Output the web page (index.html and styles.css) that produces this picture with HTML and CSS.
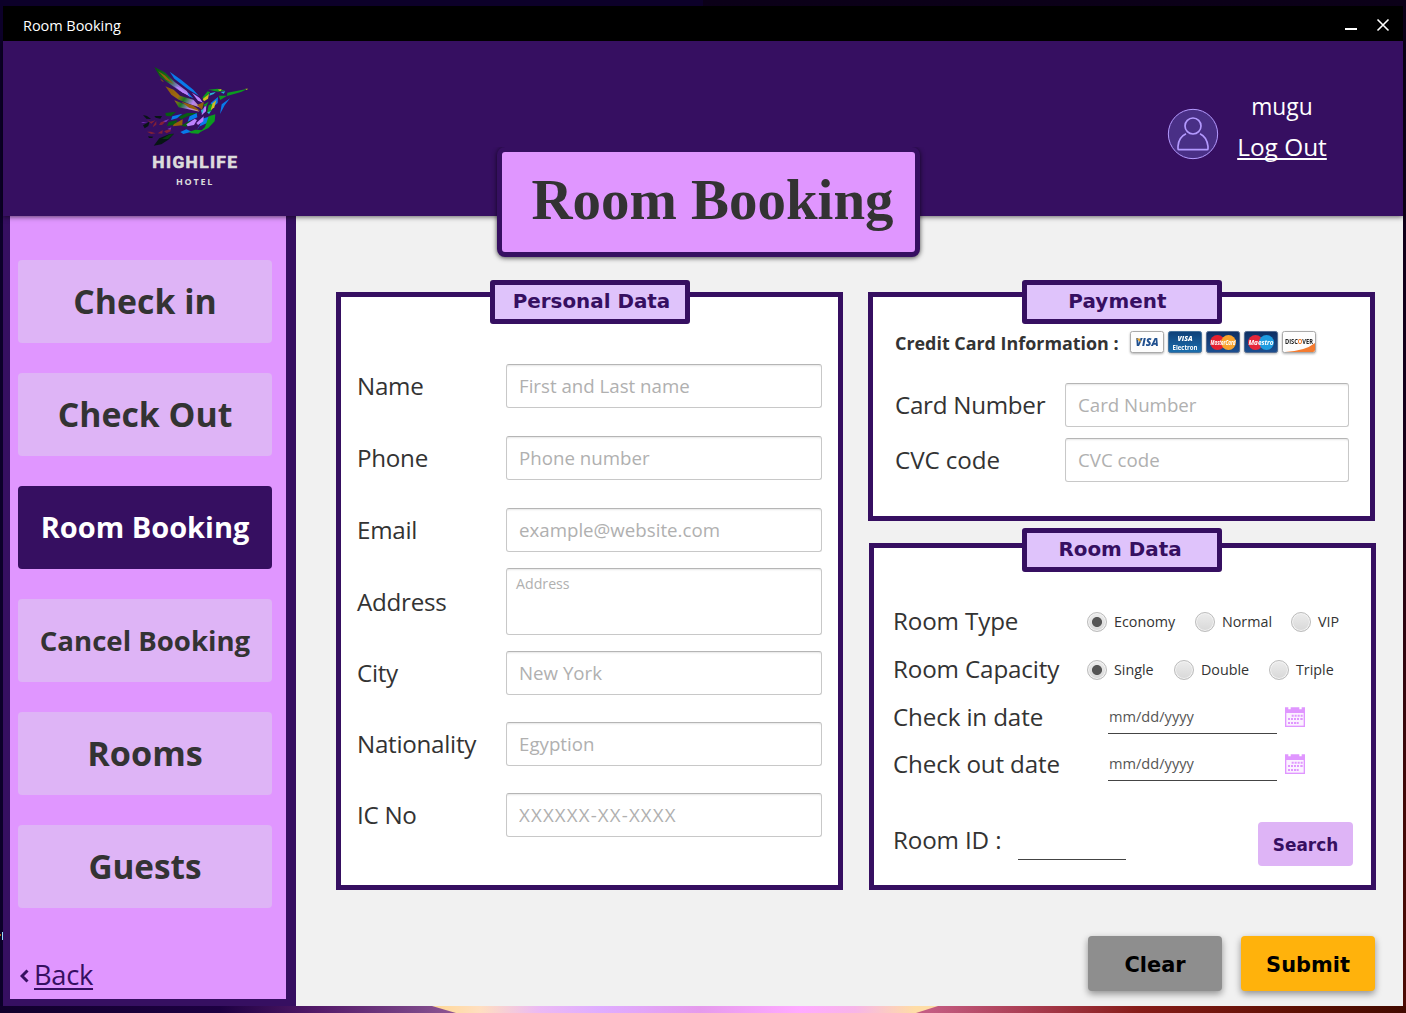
FILE: index.html
```html
<!DOCTYPE html>
<html lang="en">
<head>
<meta charset="utf-8">
<title>Room Booking</title>
<link rel="stylesheet" href="styles.css">
</head>
<body>
<svg width="0" height="0" class="defs" aria-hidden="true">
  <symbol id="calendar" viewBox="0 0 60 60">
    <path d="M0 1H10V7H17V1H43V7H50V1H60V60H0Z" fill="#e096ff"/>
    <path d="M4 18H56V56H4Z" fill="#fbf1ff"/>
    <path d="M20 23h6v6h-6zM29 23h6v6h-6zM38 23h6v6h-6zM47 23h6v6h-6zM9 33h6v6h-6zM18 33h6v6h-6zM27 33h6v6h-6zM36 33h6v6h-6zM46 33h7v6h-7zM9 45h6v6h-6zM18 45h6v6h-6zM27 45h6v6h-6zM35 45h6v6h-6z" fill="#e096ff"/>
  </symbol>
</svg>
<div class="window">
  <div class="titlebar">
    <span class="titlebar-text">Room Booking</span>
    <svg class="controls" width="46" height="14" viewBox="0 0 46 14">
      <path d="M0 10h12v2H0z" fill="#fff"/>
      <path d="M32.5 1.500L43.500 12.500M43.500 1.500L32.500 12.500" stroke="#fff" stroke-width="1.600"/>
    </svg>
  </div>
  <header class="header">
    <svg class="logo" width="130" height="140" viewBox="0 0 390 420">
      <defs>
        <linearGradient id="wing" gradientUnits="userSpaceOnUse" x1="73" y1="36" x2="218" y2="150">
          <stop offset="0" stop-color="#07530f"/><stop offset=".3" stop-color="#14701c"/><stop offset=".5" stop-color="#8f7bd8"/><stop offset=".75" stop-color="#bd82ff"/><stop offset="1" stop-color="#3f86e6"/>
        </linearGradient>
        <linearGradient id="wing-low" gradientUnits="userSpaceOnUse" x1="106" y1="94" x2="222" y2="168">
          <stop offset="0" stop-color="#8a5a0b"/><stop offset=".35" stop-color="#a06a10"/><stop offset=".5" stop-color="#1a7a22"/><stop offset=".7" stop-color="#b684f5"/><stop offset="1" stop-color="#c8a030"/>
        </linearGradient>
      </defs>
      <path d="M73 36L104 52L135 82L170 108L181 124L150 108L112 82L90 65Z" fill="url(#wing)"/>
      <path d="M106 94L131 104L150 122L190 134L212 158L176 146L146 134L124 119Z" fill="url(#wing-low)"/>
      <path d="M133 136L160 146L196 158L208 170L172 162L146 157Z" fill="url(#wing-low)"/>
      <g fill="#075c13">
        <path d="M106 174L138 170L123 184L108 183Z"/>
        <path d="M145 186L171 174L208 174L173 184L154 193Z"/>
        <path d="M116 201L142 195L136 209L111 213Z"/>
        <path d="M153 212L176 199L190 201L168 215Z"/>
      </g>
      <g fill="#94600b">
        <path d="M84 48L106 62L132 88L108 74Z"/>
        <path d="M90 70L102 80L96 79Z"/>
        <path d="M154 140L188 151L211 168L177 158Z"/>
        <path d="M132 207L158 193L157 211L128 214Z"/>
        <path d="M201 150L222 141L216 165Z"/>
      </g>
      <g fill="#087bea">
        <path d="M119 50L153 74L190 104L207 123L173 102L133 71Z"/>
        <path d="M173 112L190 130L176 124Z"/>
        <path d="M127 184L157 176L141 190L123 195Z"/>
        <path d="M179 184L200 174L202 187L173 200Z"/>
        <path d="M216 191L242 184L233 203L205 216L202 225L211 207Z"/>
        <path d="M275 148L300 130L284 151L270 177Z"/>
        <path d="M242 144L264 126L263 144L245 160Z"/>
        <path d="M151 231L169 223L185 230L160 237Z"/>
      </g>
      <g fill="#bd82ff">
        <path d="M135 94L151 99L181 125L156 112Z"/>
        <path d="M186 113L209 129L219 143L204 137Z"/>
        <path d="M169 208L194 192L201 195L192 210L173 214Z"/>
        <path d="M218 164L229 146L228 169L215 181Z"/>
        <path d="M199 204L221 184L220 199L204 210Z"/>
      </g>
      <g fill="#0c9b20">
        <path d="M217 128L233 109L241 112L222 132Z"/>
        <path d="M235 104L263 101L286 107L264 110Z"/>
        <path d="M292 113L354 101L333 111L291 123Z"/>
        <path d="M236 151L247 146L246 166L231 175Z"/>
        <path d="M220 150L236 140L228 155Z"/>
        <path d="M236 184L256 178L254 199L235 219L209 232L225 216Z"/>
        <path d="M266 122L291 122L271 135Z"/>
        <path d="M176 231L196 224L218 226L205 236L184 235Z"/>
      </g>
      <g fill="#d2bd20">
        <path d="M218 132L237 117L234 131L222 139Z"/>
        <path d="M248 145L259 135L253 157L242 166Z"/>
        <path d="M346 101L354 101L350 105Z"/>
        <path d="M263 104L275 102L271 109Z"/>
      </g>
      <g fill="#25b6d4">
        <path d="M240 115L257 111L251 117L238 122Z"/>
        <path d="M213 166L222 161L216 178Z"/>
        <path d="M272 111L286 109L281 116Z"/>
        <path d="M232 172L243 168L237 178Z"/>
      </g>
      <g fill="#071514">
        <path d="M39 180L51 183L63 192L49 191Z"/>
        <path d="M73 183L96 183L91 191L77 188Z"/>
        <path d="M39 211L50 205L59 199L55 213L44 220Z"/>
        <path d="M71 272L88 250L119 237L132 236L115 254L94 268Z"/>
        <path d="M54 244L70 245L66 249L57 249Z"/>
      </g>
      <path d="M96 252L119 238L131 237L114 252Z" fill="#07400f"/>
      <g fill="#832037">
        <path d="M51 195L62 200L76 196L64 206Z"/>
        <path d="M71 209L79 198L79 209L68 217Z"/>
        <path d="M92 202L112 195L96 210L87 210Z"/>
        <path d="M51 230L63 230L77 235L64 237Z"/>
        <path d="M83 235L98 225L97 236Z"/>
        <path d="M102 229L119 222L123 228L110 235Z"/>
      </g>
      <path d="M33 201L53 202L39 204ZM99 199L117 192L108 202ZM112 222L124 217L122 224Z" fill="#7832ba"/>
      <text class="logo-name" x="67" y="338" textLength="254" lengthAdjust="spacing">HIGHLIFE</text>
      <text class="logo-sub" x="138" y="389" textLength="109" lengthAdjust="spacing">HOTEL</text>
    </svg>
    <div class="account">
      <svg class="avatar" width="52" height="52" viewBox="0 0 156 156" fill="none" stroke="#b49aff">
        <circle cx="78" cy="78" r="74" fill="#492f86" stroke-width="3"/>
        <circle cx="78" cy="54" r="24" stroke-width="5"/>
        <path d="M57 77C42 84 34 98 33 115V122Q33 125 36 125H120Q123 125 123 122V115C121 98 114 84 99 77" stroke-width="5"/>
      </svg>
      <div class="account-text">
        <span class="user">mugu</span>
        <a class="logout">Log Out</a>
      </div>
    </div>
  </header>
  <h1 class="plaque">Room Booking</h1>
  <div class="body">
    <nav class="sidebar">
      <a class="nav">Check in</a>
      <a class="nav">Check Out</a>
      <a class="nav nav-mid active">Room Booking</a>
      <a class="nav nav-small">Cancel Booking</a>
      <a class="nav nav-rooms">Rooms</a>
      <a class="nav nav-guests">Guests</a>
      <a class="back"><svg class="chevron" width="9" height="14" viewBox="0 0 9 14"><path d="M7.500 1.500L2 7L7.500 12.500" fill="none" stroke="#360f61" stroke-width="3"/></svg><span class="back-text">Back</span></a>
    </nav>
    <main class="main">
      <div class="panels">
        <section class="panel personal">
          <h2 class="tag">Personal Data</h2>
          <label class="row"><span class="label">Name</span><input class="field" placeholder="First and Last name"></label>
          <label class="row"><span class="label">Phone</span><input class="field" placeholder="Phone number"></label>
          <label class="row"><span class="label">Email</span><input class="field" placeholder="example@website.com"></label>
          <label class="row row-area"><span class="label">Address</span><textarea class="field area" placeholder="Address"></textarea></label>
          <label class="row"><span class="label">City</span><input class="field" placeholder="New York"></label>
          <label class="row row-close"><span class="label">Nationality</span><input class="field" placeholder="Egyption"></label>
          <label class="row row-close"><span class="label">IC No</span><input class="field ic" placeholder="XXXXXX-XX-XXXX"></label>
        </section>
        <div class="column">
          <section class="panel payment">
            <h2 class="tag tag-payment">Payment</h2>
            <div class="cards-row">
              <span class="cards-label">Credit Card Information :</span>
              <svg class="cards" width="190" height="26" viewBox="0 0 190 26">
                <defs>
                  <linearGradient id="blue" x1="0" y1="0" x2="0" y2="1"><stop offset="0" stop-color="#0f4078"/><stop offset="1" stop-color="#1b6fae"/></linearGradient>
                  <linearGradient id="navy" x1="0" y1="0" x2="0" y2="1"><stop offset="0" stop-color="#0e2f62"/><stop offset="1" stop-color="#1c4f90"/></linearGradient>
                </defs>
                <g stroke-width="1">
                  <rect x="1.500" y="2.500" width="33" height="21" rx="2" fill="#fdfdfd" stroke="#aaa"/>
                  <rect x="39.500" y="2.500" width="33" height="21" rx="2" fill="url(#blue)" stroke="#44719c"/>
                  <rect x="77.500" y="2.500" width="33" height="21" rx="2" fill="url(#navy)" stroke="#556c91"/>
                  <rect x="115.500" y="2.500" width="33" height="21" rx="2" fill="url(#navy)" stroke="#556c91"/>
                  <rect x="153.500" y="2.500" width="33" height="21" rx="2" fill="#fdfdfd" stroke="#aaa"/>
                </g>
                <path d="M156 23Q176 22 186 14V21Q186 23 184 23Z" fill="#f47b30"/>
                <circle cx="88.500" cy="13.500" r="7.500" fill="#e5202e"/><circle cx="99.500" cy="13.500" r="7.500" fill="#f8a32d"/>
                <circle cx="126.500" cy="13.500" r="7.500" fill="#e5273a"/><circle cx="137.500" cy="13.500" r="7.500" fill="#1e9ce0"/>
                <text x="6.500" y="17" class="visa" fill="#20508f" textLength="23" lengthAdjust="spacingAndGlyphs">VISA</text>
                <path d="M7 9.500h4l1 4z" fill="#e9a52b"/>
                <text x="48.500" y="12" class="visa-small" textLength="15" lengthAdjust="spacingAndGlyphs">VISA</text>
                <text x="43.500" y="20.500" class="electron" textLength="25" lengthAdjust="spacingAndGlyphs">Electron</text>
                <text x="81.500" y="16" class="brand" textLength="25" lengthAdjust="spacingAndGlyphs">MasterCard</text>
                <text x="119.500" y="16" class="brand" textLength="25" lengthAdjust="spacingAndGlyphs">Maestro</text>
                <text x="156" y="14.500" class="discover" textLength="28" lengthAdjust="spacingAndGlyphs">DISC<tspan fill="#ef7622">O</tspan>VER</text>
              </svg>
            </div>
            <label class="row"><span class="label">Card Number</span><input class="field" placeholder="Card Number"></label>
            <label class="row row-cvc"><span class="label">CVC code</span><input class="field" placeholder="CVC code"></label>
          </section>
          <section class="panel room">
            <h2 class="tag tag-room">Room Data</h2>
            <div class="line"><span class="label">Room Type</span>
              <span class="radio on"></span><span class="opt w-economy">Economy</span>
              <span class="radio"></span><span class="opt w-normal">Normal</span>
              <span class="radio"></span><span class="opt">VIP</span>
            </div>
            <div class="line"><span class="label">Room Capacity</span>
              <span class="radio on"></span><span class="opt w-single">Single</span>
              <span class="radio"></span><span class="opt w-double">Double</span>
              <span class="radio"></span><span class="opt">Triple</span>
            </div>
            <div class="line line-date"><span class="label">Check in date</span><span class="date">mm/dd/yyyy</span><svg class="cal" width="20" height="20"><use href="#calendar"/></svg></div>
            <div class="line line-date line-out"><span class="label">Check out date</span><span class="date">mm/dd/yyyy</span><svg class="cal" width="20" height="20"><use href="#calendar"/></svg></div>
            <div class="line line-id"><span class="label">Room ID :</span><span class="room-id"></span><button class="search">Search</button></div>
          </section>
        </div>
      </div>
      <div class="actions">
        <button class="action clear">Clear</button>
        <button class="action submit">Submit</button>
      </div>
    </main>
  </div>
</div>
<div class="desktop-strip"><div class="glow"></div></div>
<div class="desktop-mark"></div>
</body>
</html>
```
FILE: styles.css
```css
* { box-sizing: border-box; }
body {
  margin: 0;
  width: 1406px;
  height: 1013px;
  padding: 6px 3px 0;
  overflow: hidden;
  position: relative;
  background: linear-gradient(90deg, #0c0029 0 50%, transparent 50%), linear-gradient(180deg, #0b0018 0, #14001c 40%, #430a08 80%, #4d0c05 100%);
  font-family: "Open Sans", "Noto Sans", sans-serif;
  color: #333;
}
.defs { position: absolute; }
.window { width: 1400px; height: 1000px; position: relative; background: #f1f1f1; }
.titlebar {
  height: 35px;
  background: #000;
  color: #fff;
  display: flex;
  align-items: center;
  justify-content: space-between;
  padding: 3px 12px 0 20px;
  font-size: 14.5px;
}
.titlebar-text { letter-spacing: -0.05px; }
.header {
  height: 175px;
  background: #360f61;
  display: flex;
  justify-content: space-between;
  padding: 14px 75px 0 127px;
  position: relative;
  z-index: 2;
  box-shadow: 0 1px 5px rgba(0, 0, 0, .6);
}
.logo-name { font: 700 52px "Roboto", sans-serif; fill: #dcdcdc; stroke: #dcdcdc; stroke-width: 2; }
.logo-sub { font: 700 27px "Open Sans", sans-serif; fill: #dcdcdc; }
.account { display: flex; color: #fff; }
.avatar { margin-top: 52.5px; }
.account-text { display: flex; flex-direction: column; align-items: center; width: 91px; margin-left: 17.5px; margin-right: .5px; padding-top: 35px; }
.user { font-size: 22.8px; line-height: 33px; }
.logout { font-size: 24.4px; line-height: 30px; margin-top: 9px; text-decoration: underline; text-decoration-thickness: 2px; text-underline-offset: 2px; text-decoration-skip-ink: none; white-space: nowrap; }
.plaque {
  position: absolute;
  left: 494px;
  top: 141px;
  width: 423px;
  height: 110px;
  margin: 0;
  padding-left: 8px;
  z-index: 3;
  background: #e096ff;
  border: 5px solid #360f61;
  border-radius: 8px;
  clip-path: inset(0 -10px -12px -10px);
  box-shadow: 0 1px 5px rgba(0, 0, 0, .7);
  font: 700 56.9px/96px "Liberation Serif", "Times New Roman", serif;
  text-align: center;
}
.body { display: flex; height: 790px; }
.sidebar {
  width: 293px;
  background: #e096ff;
  border: solid #360f61;
  border-width: 0 10px 7px 7px;
  padding: 44px 14px 0 8px;
  display: flex;
  flex-direction: column;
  gap: 30px;
}
.nav {
  height: 83px;
  line-height: 83px;
  text-align: center;
  border-radius: 4px;
  background: #deb4f6;
  font-size: 33.8px;
  font-weight: 700;
  white-space: nowrap;
}
.nav-mid { font-size: 29px; line-height: 82px; }
.nav-small { font-size: 27.600px; }
.nav-rooms { font-size: 34.2px; line-height: 82px; }
.nav-guests { font-size: 33.3px; }
.active { background: #360f61; color: #fff; }
.back { display: flex; align-items: center; gap: 5px; margin-top: 15px; padding-left: 2px; height: 42px; color: #360f61; }
.chevron { margin-top: 3px; }
.back-text { font-size: 27.3px; letter-spacing: -0.3px; text-decoration: underline; text-decoration-thickness: 2px; text-underline-offset: 3px; }
.main { flex: 1; background: #f1f1f1; padding: 76px 27px 0 40px; }
.panels { display: flex; gap: 25px; }
.column { width: 508px; }
.panel { position: relative; width: 507px; background: #fff; border: 5px solid #360f61; }
.tag {
  position: absolute;
  top: -17px;
  left: 149px;
  width: 200px;
  height: 44px;
  margin: 0;
  padding-left: 3px;
  background: #dfc3fb;
  border: 5px solid #360f61;
  border-radius: 3px;
  color: #360f61;
  text-align: center;
  font: 700 19.900px/33px "DejaVu Sans", Verdana, sans-serif;
}
.tag-payment { padding: 0 9px 0 0; letter-spacing: .1px; }
.tag-room { padding: 0 4px 0 0; }
.personal { height: 598px; padding: 67px 16px 0; }
.row { display: flex; align-items: center; height: 44px; margin-top: 28px; }
.tag + .row { margin-top: 0; }
.row-area { height: 67px; margin: 16px 0; }
.row-area + .row { margin-top: 0; }
.row-close { margin-top: 27px; }
.label { font-size: 24.2px; letter-spacing: -0.28px; white-space: nowrap; padding-bottom: 2px; }
.personal .label { width: 149px; }
.row-area .label { padding-bottom: 0; }
.field {
  width: 316px;
  height: 44px;
  margin: 0;
  padding: 0 12px 2px;
  border: 1px solid #c8c8c8;
  border-top-color: #b5b5b5;
  border-radius: 3px;
  background: #fff;
  box-shadow: inset 0 2px 2px -1px #e6e6e6;
  font: 18.700px "Open Sans", sans-serif;
  resize: none;
  outline: 0;
}
.field::placeholder { color: #b0b0b0; }
.ic { letter-spacing: 1.15px; }
.area { height: 67px; padding: 5px 9px; font-size: 14.200px; }
.payment { height: 229px; padding: 33px 20px 0 22px; }
.payment .tag, .room .tag { left: 149px; }
.cards-row { display: flex; align-items: center; height: 26px; }
.cards-label { width: 234px; font-size: 17.900px; font-weight: 700; white-space: nowrap; }
.cards { margin-top: -2px; filter: drop-shadow(0 1px 1px rgba(0, 0, 0, .3)); }
.visa { font: italic 800 10px "Open Sans", sans-serif; }
.visa-small { font: italic 800 7px "Open Sans", sans-serif; fill: #fff; }
.electron { font: 700 6.500px "Open Sans", sans-serif; fill: #fff; }
.brand { font: italic 700 7px "Open Sans", sans-serif; fill: #fff; }
.discover { font: 700 6.500px "Open Sans", sans-serif; fill: #222; }
.payment .row { margin-top: 27px; }
.payment .row-cvc { margin-top: 11px; }
.payment .label { width: 170px; }
.payment .row-cvc .label { letter-spacing: -0.1px; }
.payment .field { width: 284px; }
.room { height: 347px; margin: 22px 0 0 1px; padding: 50px 18px 0 19px; }
.room .tag { top: -20px; left: 148px; }
.line { display: flex; align-items: center; height: 48px; }
.line .label { width: 194px; padding-bottom: 3px; letter-spacing: -0.14px; }
.radio { width: 20px; height: 20px; border: 1px solid #bcbcbc; border-radius: 50%; background: linear-gradient(#ececec, #d8d8d8); box-shadow: inset 0 0 0 1px #f4f4f4; }
.on { background: radial-gradient(circle, #555 0 4.600px, transparent 5.400px), linear-gradient(#ececec, #d8d8d8); }
.opt { font-size: 14.300px; margin-left: 7px; padding-bottom: 2px; white-space: nowrap; }
.w-economy { width: 81px; }
.w-normal { width: 69px; }
.w-single { width: 60px; }
.w-double { width: 68px; }
.line-date { padding-bottom: 2px; }
.line-date .label { padding-bottom: 1px; }
.date { width: 169px; height: 34px; margin-left: 21px; padding-left: 1px; border-bottom: 1px solid #444; font-size: 14.600px; line-height: 33px; color: #555; }
.cal { margin-left: 8px; }
.line-out { height: 46px; }
.line-id { margin-top: 30px; height: 44px; }
.line-id .label { width: 125px; padding-bottom: 1px; }
.room-id { width: 108px; height: 39px; border-bottom: 1px solid #444; }
.search { width: 95px; height: 44px; margin-left: 132px; margin-top: 8px; padding: 2px 0 0; border: 0; border-radius: 4px; background: #deb4f6; color: #360f61; font: 700 16.900px "DejaVu Sans", Verdana, sans-serif; }
.actions { display: flex; justify-content: flex-end; gap: 19px; margin-top: 46px; padding-right: 1px; }
.action { width: 134px; height: 55px; border: 0; border-radius: 4px; padding: 2px 0 0; box-shadow: 0 3px 7px rgba(0, 0, 0, .4); font: 700 20.900px "DejaVu Sans", Verdana, sans-serif; color: #000; }
.clear { background: #8e8e8e; }
.submit { background: #ffb20c; }
.desktop-strip {
  width: 1406px;
  height: 7px;
  margin-left: -3px;
  background: linear-gradient(90deg, #10002b 0, #1d0042 220px, #551b6a 320px, #7b4688 420px, #8d5391 450px, #c45c82 930px, #a93c50 1030px, #861c18 1140px, #5c1003 1300px, #420a00 1406px);
}
.glow {
  height: 7px;
  clip-path: polygon(432px 0, 938px 0, 916px 7px, 456px 7px);
  background: linear-gradient(90deg, #ffd99c 440px, #ffdfc0 480px, #ebb9f4 540px, #dfadff 600px, #e59aec 700px, #ffaaff 800px, #f7b5e8 855px, #ffdda6 915px);
}
.desktop-mark { position: absolute; left: 0; top: 932px; width: 3px; height: 8px; background: linear-gradient(#b86a18, #b86a18) 0 2px / 1px 2px no-repeat, linear-gradient(#8fdcff, #8fdcff) 2px 0 / 1px 8px no-repeat; }
```
